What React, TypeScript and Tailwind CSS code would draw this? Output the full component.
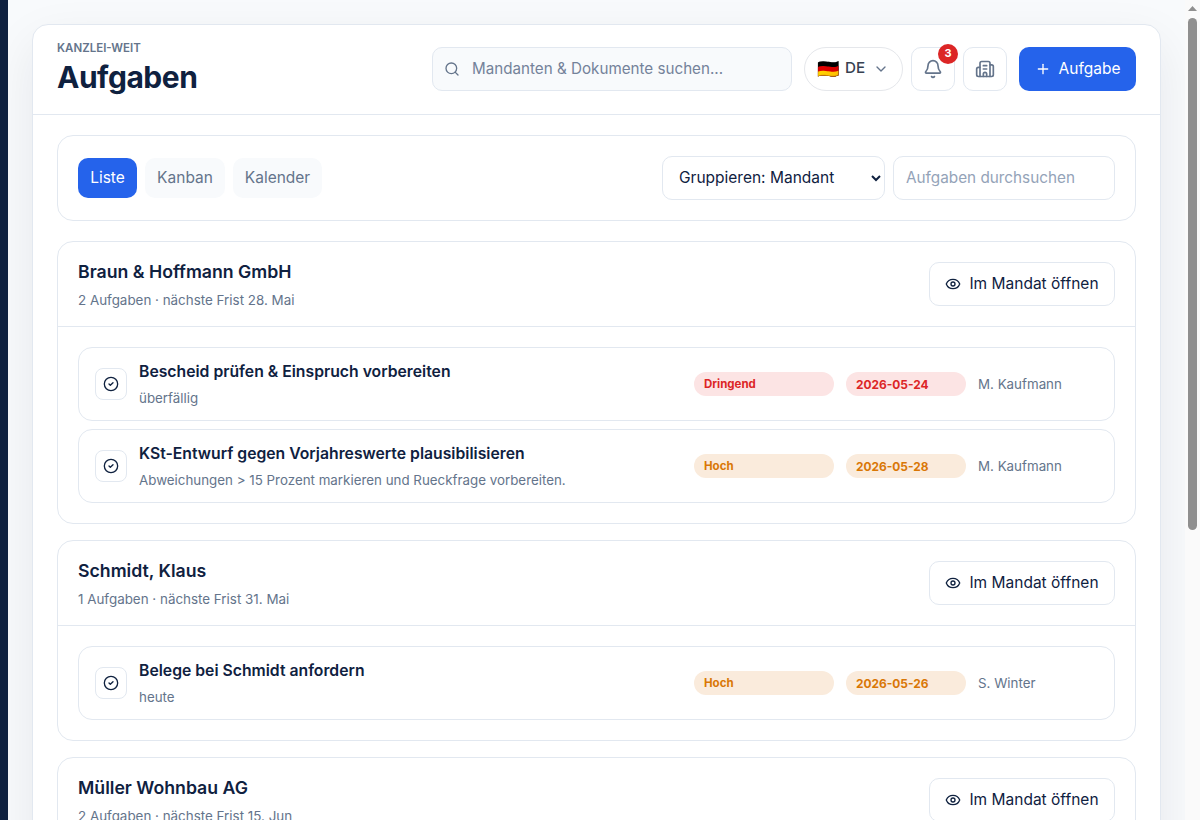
import React from 'react';
import { Bell, Building2, ChevronDown, CircleCheck, Eye, Plus, Search } from 'lucide-react';

type Task = {
  title: string;
  note: string;
  priority: 'Dringend' | 'Hoch';
  due: string;
  owner: string;
};

type Group = {
  name: string;
  meta: string;
  tasks: Task[];
};

const groups: Group[] = [
  {
    name: 'Braun & Hoffmann GmbH',
    meta: '2 Aufgaben · nächste Frist 28. Mai',
    tasks: [
      { title: 'Bescheid prüfen & Einspruch vorbereiten', note: 'überfällig', priority: 'Dringend', due: '2026-05-24', owner: 'M. Kaufmann' },
      { title: 'KSt-Entwurf gegen Vorjahreswerte plausibilisieren', note: 'Abweichungen > 15 Prozent markieren und Rueckfrage vorbereiten.', priority: 'Hoch', due: '2026-05-28', owner: 'M. Kaufmann' },
    ],
  },
  {
    name: 'Schmidt, Klaus',
    meta: '1 Aufgaben · nächste Frist 31. Mai',
    tasks: [
      { title: 'Belege bei Schmidt anfordern', note: 'heute', priority: 'Hoch', due: '2026-05-26', owner: 'S. Winter' },
    ],
  },
  {
    name: 'Müller Wohnbau AG',
    meta: '2 Aufgaben · nächste Frist 15. Jun',
    tasks: [
      { title: 'Jahresabschluss abstimmen', note: 'diese Woche', priority: 'Hoch', due: '2026-06-15', owner: 'S. Winter' },
    ],
  },
];

const TaskRow = ({ task }: { task: Task }) => {
  const tone = task.priority === 'Dringend'
    ? 'bg-[#fce4e4] text-[#dc2626]'
    : 'bg-[#faebdc] text-[#d97706]';

  return (
    <div className="grid grid-cols-[1fr_140px_120px_120px] items-center gap-3 h-[74px] px-4 rounded-[14px] border border-[#e2e8f0] bg-white">
      <div className="flex items-center gap-3 min-w-0">
        <div className="flex items-center justify-center w-8 h-8 rounded-lg border border-[#e2e8f0] text-[#0f213f] shrink-0">
          <CircleCheck className="w-4 h-4" />
        </div>
        <div className="min-w-0">
          <div className="text-[15.75px] leading-[22px] -mt-[1px] font-semibold text-[#0f213f]">{task.title}</div>
          <div className="mt-[6px] text-[13.35px] leading-[18px] text-[#64748b]">{task.note}</div>
        </div>
      </div>
      <span className={`h-6 flex items-center px-[10px] pt-px rounded-full text-[11.5px] font-bold ${tone}`}>{task.priority}</span>
      <span className={`h-6 flex items-center px-[10px] pt-px rounded-full text-[11.9px] font-bold ${tone}`}>{task.due}</span>
      <span className="pt-px text-[13.35px] text-[#64748b]">{task.owner}</span>
    </div>
  );
};

const GroupCard = ({ group }: { group: Group }) => (
  <section className="rounded-2xl border border-[#e2e8f0] bg-white">
    <div className="flex items-center justify-between h-[85px] px-5 border-b border-[#e2e8f0]">
      <div>
        <h2 className="text-[17.7px] leading-[24px] font-semibold text-[#0f213f]">{group.name}</h2>
        <p className="mt-[7px] text-[13.4px] leading-[18px] text-[#64748b]">{group.meta}</p>
      </div>
      <button className="flex items-center justify-center gap-2 w-[186px] h-11 rounded-[10px] border border-[#e2e8f0] bg-white text-[15.5px] text-[#0f213f]">
        <Eye className="w-4 h-4" />
        Im Mandat öffnen
      </button>
    </div>
    <div className="flex flex-col gap-2 p-5">
      {group.tasks.map((task) => (
        <TaskRow key={task.title} task={task} />
      ))}
    </div>
  </section>
);

// window scrollbar as it shows in the screenshot
const ScrollBar = () => (
  <div className="w-[15px] shrink-0 bg-[#fafafa] pl-[3px] pt-[6px]">
    <svg width="9" height="5" viewBox="0 0 9 5" className="block">
      <path d="M4.5 0 9 5H0z" fill="#8f8f8f" />
    </svg>
    <div className="mt-[7px] w-[9px] h-[512px] rounded-full bg-[#8f8f8f]" />
  </div>
);

const App = () => {
  return (
    <div className="flex h-screen overflow-hidden bg-[#f8fafc] font-['Inter',sans-serif]">
      <aside className="w-2 shrink-0 bg-[#0f213f]" />
      <main className="flex-1 min-w-0 p-6 overflow-hidden">
        <div className="rounded-2xl border border-[#e2e8f0] bg-white shadow-[0_18px_50px_rgba(15,23,42,0.08)]">
          <header className="flex items-center justify-between h-[90px] px-6 border-b border-[#e2e8f0]">
            <div className="-mt-[5px]">
              <div className="text-[11.5px] leading-[16px] font-semibold uppercase text-[#64748b]">Kanzlei-weit</div>
              <h1 className="mt-[3px] text-[30px] leading-[36px] font-bold tracking-[-0.016em] text-[#0f213f]">Aufgaben</h1>
            </div>
            <div className="flex items-center -mt-[2px]">
              <div className="flex items-center gap-3 w-[360px] h-11 px-[13px] rounded-[10px] border border-[#e2e8f0] bg-[#f8fafc]">
                <Search className="w-4 h-4 text-[#64748b] -ml-[2px]" />
                <span className="pt-[2px] text-[15.2px] text-[#74829a]">Mandanten &amp; Dokumente suchen...</span>
              </div>
              <button className="flex items-center ml-3 w-[99px] h-11 pl-3 rounded-full border border-[#e5e7eb] bg-white text-[15.2px] font-medium text-[#374151]">
                <span className="text-[18px] leading-none">🇩🇪</span>
                <span className="ml-[6px]">DE</span>
                <ChevronDown className="w-4 h-4 ml-2 text-[#64748b]" />
              </button>
              <button className="relative flex items-center justify-center ml-2 w-11 h-11 rounded-[10px] border border-[#e2e8f0] bg-white text-[#64748b]">
                <Bell className="w-5 h-5" />
                <span className="absolute -top-1 -right-1 flex items-center justify-center w-5 h-5 rounded-full bg-[#dc2626] text-[11px] font-bold text-white">3</span>
              </button>
              <button className="flex items-center justify-center ml-2 w-11 h-11 rounded-[10px] border border-[#e2e8f0] bg-white text-[#64748b]">
                <Building2 className="w-5 h-5" />
              </button>
              <button className="flex items-center justify-center gap-2 ml-3 w-[117px] h-11 rounded-[10px] bg-[#2563eb] text-[15.5px] text-white">
                <Plus className="w-4 h-4" />
                Aufgabe
              </button>
            </div>
          </header>

          <div className="flex flex-col gap-4 px-6 pt-5 pb-6">
            <div className="flex items-center justify-between h-[86px] px-5 mb-1 rounded-2xl border border-[#e2e8f0] bg-white">
              <div className="flex items-center gap-2">
                <button className="w-[59px] h-10 rounded-[10px] bg-[#2563eb] text-[15.5px] text-white">Liste</button>
                <button className="w-[80px] h-10 rounded-[10px] bg-[#f8fafc] text-[15.5px] text-[#64748b]">Kanban</button>
                <button className="w-[89px] h-10 rounded-[10px] bg-[#f8fafc] text-[15.5px] text-[#64748b]">Kalender</button>
              </div>
              <div className="flex items-center gap-2">
                <select className="w-[223px] h-11 px-3 pb-[2px] rounded-[10px] border border-[#e2e8f0] bg-white text-[15.5px] text-[#0f213f]">
                  <option>Gruppieren: Mandant</option>
                  <option>Gruppieren: Frist</option>
                </select>
                <input
                  placeholder="Aufgaben durchsuchen"
                  className="w-[222px] h-11 px-3 pb-[2px] rounded-[10px] border border-[#e2e8f0] bg-white text-[15.3px] text-[#0f213f] placeholder:text-[#94a3b8] outline-none"
                />
              </div>
            </div>
            {groups.map((group) => (
              <GroupCard key={group.name} group={group} />
            ))}
          </div>
        </div>
      </main>
      <ScrollBar />
    </div>
  );
};

export default App;
